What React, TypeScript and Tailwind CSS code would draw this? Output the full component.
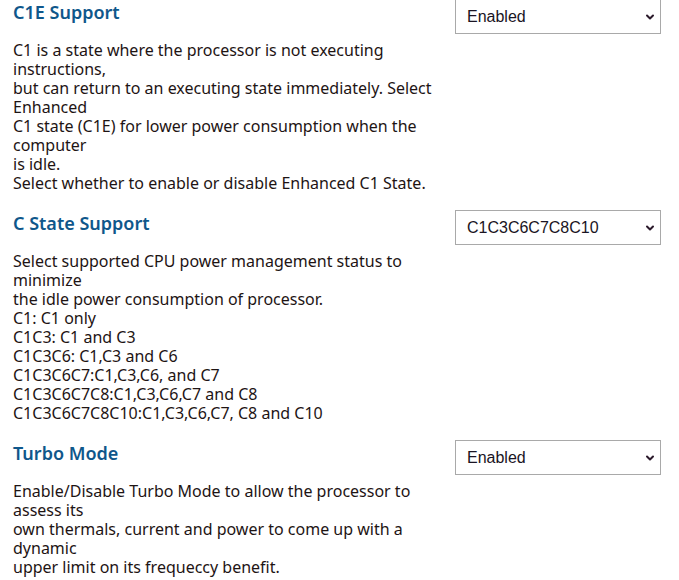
import { ChevronDown } from "lucide-react";

const sections = [
  {
    title: "C1E Support",
    value: "Enabled",
    options: ["Disabled", "Enabled"],
    text: "C1 is a state where the processor is not executing instructions,\nbut can return to an executing state immediately. Select Enhanced\nC1 state (C1E) for lower power consumption when the computer\nis idle.\nSelect whether to enable or disable Enhanced C1 State.",
  },
  {
    title: "C State Support",
    value: "C1C3C6C7C8C10",
    options: ["C1", "C1C3", "C1C3C6", "C1C3C6C7", "C1C3C6C7C8", "C1C3C6C7C8C10"],
    text: "Select supported CPU power management status to minimize\nthe idle power consumption of processor.\nC1: C1 only\nC1C3: C1 and C3\nC1C3C6: C1,C3 and C6\nC1C3C6C7:C1,C3,C6, and C7\nC1C3C6C7C8:C1,C3,C6,C7 and C8\nC1C3C6C7C8C10:C1,C3,C6,C7, C8 and C10",
  },
  {
    title: "Turbo Mode",
    value: "Enabled",
    options: ["Disabled", "Enabled"],
    text: "Enable/Disable Turbo Mode to allow the processor to assess its\nown thermals, current and power to come up with a dynamic\nupper limit on its frequeccy benefit.",
  },
];

function Setting({ title, value, options, text }: (typeof sections)[number]) {
  return (
    <section className="flex flex-col">
      <div className="flex items-start justify-between">
        <h3 className="pt-px text-[18px] leading-6 font-semibold text-[#0f578b]">{title}</h3>
        <div className="relative h-[35px] w-[206px]">
          <select
            defaultValue={value}
            className="h-full w-full appearance-none rounded-none border border-[#a9a9a9] bg-white pl-[11px] font-['Liberation_Sans',Arial,sans-serif] text-[16px] text-[#1a1423] outline-none"
          >
            {options.map((o) => (
              <option key={o}>{o}</option>
            ))}
          </select>
          <ChevronDown
            className="pointer-events-none absolute top-1/2 right-[5px] h-[12px] w-[12px] -translate-y-1/2 text-[#2b1a2b]"
            strokeWidth={4}
          />
        </div>
      </div>
      <p className="mt-[7px] w-[436px] text-[16px] leading-[19px] whitespace-pre-line text-[#1e1414]">{text}</p>
    </section>
  );
}

export default function App() {
  return (
    <div className="-mt-px flex min-h-[580px] w-[679px] flex-col gap-[17px] bg-white pr-[18px] pl-[13px] font-['Noto_Sans',sans-serif]">
      {sections.map((s) => (
        <Setting key={s.title} {...s} />
      ))}
    </div>
  );
}
